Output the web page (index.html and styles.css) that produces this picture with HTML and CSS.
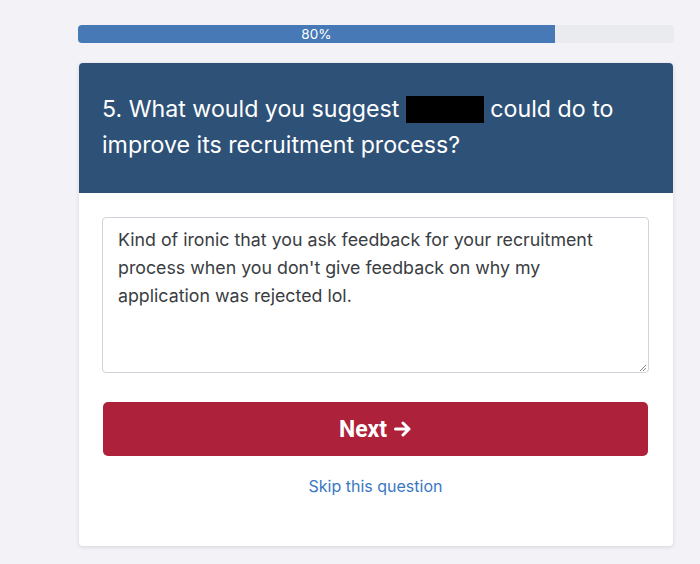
FILE: index.html
```html
<!DOCTYPE html>
<html>
<head>
<meta charset="utf-8">
<link rel="stylesheet" href="styles.css">
</head>
<body>
<div class="page">
  <div class="progress"><div class="progress-fill" style="width:80%">80%</div></div>
  <div class="card">
    <div class="card-header">
      <h1 class="question">5. What would you suggest <span class="redact"></span> could do to improve its recruitment process?</h1>
    </div>
    <div class="card-body">
      <div class="answer">Kind of ironic that you ask feedback for your recruitment process when you don't give feedback on why my application was rejected lol.<span class="grip"><svg width="9" height="9" viewBox="0 0 9 9"><path d="M8 2 L2 8 M8 5 L5 8" stroke="#888" stroke-width="1" fill="none"/></svg></span></div>
      <button class="next">Next <svg class="arrow" width="18" height="16" viewBox="0 0 18 16"><path d="M1.5 8 H15 M9 2 L15 8 L9 14" stroke="#fff" stroke-width="3" fill="none" stroke-linecap="round" stroke-linejoin="round"/></svg></button>
      <a class="skip" href="#">Skip this question</a>
    </div>
  </div>
</div>
</body>
</html>
```
FILE: styles.css
```css
html, body { margin: 0; padding: 0; }
body {
  background: #f3f3f7;
  font-family: Inter, "Liberation Sans", Arial, sans-serif;
  width: 700px;
  height: 564px;
  overflow: hidden;
}
.page {
  padding: 25px 26px 0 78px;
}
.progress {
  height: 18px;
  background: #e9ebef;
  border-radius: 4px;
  overflow: hidden;
  display: flex;
}
.progress-fill {
  background: #4679b5;
  color: #fff;
  font-size: 13.5px;
  line-height: 18px;
  text-align: center;
}
.card {
  margin: 20px 1px 0 1px;
  background: #fff;
  border-radius: 4px;
  box-shadow: 0 1px 4px rgba(0,0,0,0.12);
  overflow: hidden;
}
.card-header {
  background: #2e5178;
  padding: 28px 20px 26px 23px;
  height: 76px;
}
.question {
  margin: 0;
  color: #fff;
  font-weight: normal;
  font-size: 23.2px;
  line-height: 36px;
}
.redact {
  display: inline-block;
  width: 78px;
  height: 27px;
  background: #000;
  vertical-align: -6px;
}
.card-body {
  padding: 24px 24px 50px 23px;
  display: flex;
  flex-direction: column;
}
.answer {
  position: relative;
  height: 156px;
  box-sizing: border-box;
  border: 1px solid #ced4da;
  border-radius: 4px;
  padding: 8px 30px 8px 15px;
  font-size: 17.8px;
  line-height: 28px;
  color: #3a3d42;
}
.grip {
  position: absolute;
  right: 1px;
  bottom: 0px;
  line-height: 0;
}
.next {
  margin-top: 29px;
  height: 54px;
  border: none;
  border-radius: 5px;
  background: #ae213a;
  color: #fff;
  font-family: Roboto, "Liberation Sans", sans-serif;
  font-weight: bold;
  font-size: 23px;
  cursor: pointer;
  margin-left: 1px;
  margin-right: 1px;
  display: flex;
  align-items: center;
  justify-content: center;
  gap: 7px;
}
.arrow { display: block; }
.skip {
  margin-top: 20px;
  align-self: center;
  color: #3a78c2;
  text-decoration: none;
  font-size: 16px;
  line-height: 20px;
}
```
